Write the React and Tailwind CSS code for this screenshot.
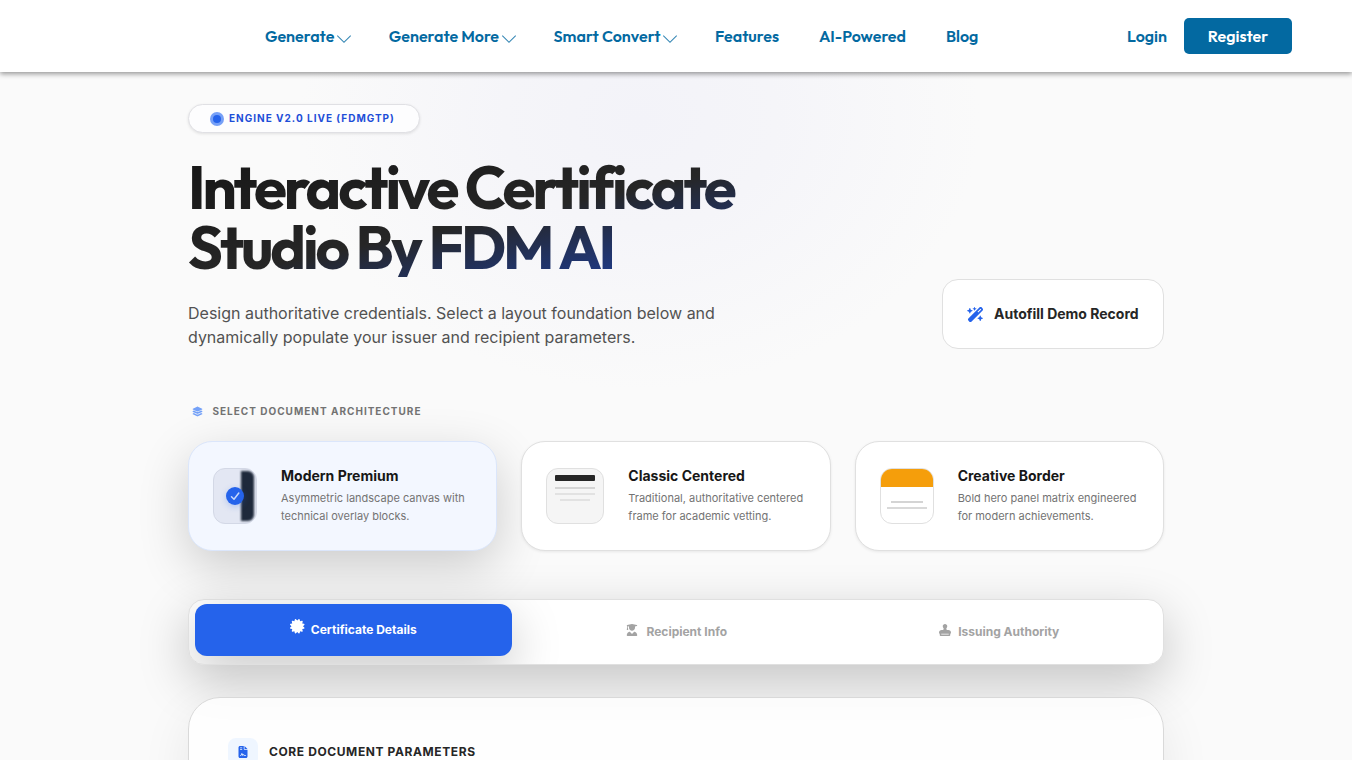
import {
  FaWandMagicSparkles,
  FaLayerGroup,
  FaCertificate,
  FaUserGraduate,
  FaStamp,
  FaFileContract,
} from "react-icons/fa6";

const navItems = [
  { label: "Generate", menu: true },
  { label: "Generate More", menu: true },
  { label: "Smart Convert", menu: true },
  { label: "Features" },
  { label: "AI-Powered" },
  { label: "Blog" },
];

function Header() {
  return (
    <header className="relative z-10 flex h-[72px] items-center bg-white pr-[60px] pl-[265px] font-['Outfit',sans-serif] text-base font-semibold text-[#0369a1] shadow-[0_2px_5px_rgba(0,0,0,0.4)]">
      <nav className="flex items-center gap-10">
        {navItems.map((item) => (
          <a key={item.label} className="flex items-center whitespace-nowrap">
            {item.label}
            {item.menu && (
              <span className="ml-[4.5px] size-[10px] rotate-45 border-r border-b border-[#0369a1]/80" />
            )}
          </a>
        ))}
      </nav>
      <div className="ml-auto flex items-center gap-[17px]">
        <a>Login</a>
        <a className="flex h-9 w-[108px] items-center justify-center rounded-[5px] bg-[#0369a1] text-white">
          Register
        </a>
      </div>
    </header>
  );
}

function ModernThumb() {
  return (
    <div className="relative h-14 w-11 shrink-0">
      <div className="flex h-full justify-end overflow-hidden rounded-xl border border-[#d3d8e6] bg-[#e3e7f3] p-[2px]">
        <div className="h-full w-[13px] rounded-r-[6px] bg-[#1e293b] blur-[1px]" />
      </div>
      <div className="absolute inset-0 flex items-center justify-center">
        <span className="flex size-[18px] items-center justify-center rounded-full bg-[#2563eb] shadow-[0_2px_6px_rgba(37,99,235,0.25)]">
          <svg viewBox="0 0 18 18" className="size-[18px]" fill="none" stroke="#c7d8fb" strokeWidth="1.5" strokeLinecap="round" strokeLinejoin="round">
            <path d="M5.5 9.8 8 12.3 12.8 6" />
          </svg>
        </span>
      </div>
    </div>
  );
}

function ClassicThumb() {
  return (
    <div className="flex h-14 w-[58px] shrink-0 flex-col items-center rounded-xl border border-[#e0e0e0] bg-[#f5f5f5] pt-[6px]">
      <div className="h-[6px] w-10 rounded-[1px] bg-[#262626]" />
      <div className="mt-[6px] h-[2px] w-10 bg-[#d4d4d4]" />
      <div className="mt-1 h-[2px] w-10 bg-[#e2e2e2]" />
      <div className="mt-1 h-[2px] w-[30px] bg-[#e2e2e2]" />
    </div>
  );
}

function CreativeThumb() {
  return (
    <div className="flex h-14 w-[54px] shrink-0 flex-col items-center overflow-hidden rounded-xl border border-[#e0e0e0] bg-white">
      <div className="h-[18px] w-full bg-[#f59e0b]" />
      <div className="mt-[14px] h-[2px] w-8 bg-[#d4d4d4]" />
      <div className="mt-1 h-[2px] w-10 bg-[#d9d9d9]" />
    </div>
  );
}

function LayoutCard({ thumb, title, lines, active }) {
  return (
    <div
      className={
        active
          ? "flex h-[110px] items-center gap-6 rounded-3xl border border-[#dbe6fb] bg-[#f3f7ff] pl-6 shadow-[0_16px_50px_rgba(0,0,0,0.19)]"
          : "flex h-[110px] items-center gap-6 rounded-3xl border border-[#e0e0e0] bg-white pl-6 shadow-[0_1px_3px_rgba(0,0,0,0.08)]"
      }
    >
      {thumb}
      <div className="pb-[2px] whitespace-nowrap">
        <h3 className="text-sm leading-5 font-bold text-[#171717]">{title}</h3>
        <p className="mt-[3px] text-[11px] leading-[18px] text-[#737373]">
          {lines[0]}
          <br />
          {lines[1]}
        </p>
      </div>
    </div>
  );
}

export default function App() {
  return (
    <div className="h-[760px] overflow-hidden bg-[#fafafa] font-['Inter',sans-serif]">
      <Header />
      <main className="h-[688px] overflow-hidden bg-[radial-gradient(ellipse_340px_270px_at_640px_48px,#f3f3f9_0%,#f5f5f9_40%,#fafafa_100%)] px-[188px] pt-8">
        <div className="flex items-end justify-between">
          <div className="w-[576px]">
            <div className="flex h-[29px] w-[232px] items-center gap-[5px] rounded-full border border-[#e0e0e4] bg-[#fdfdfe] pl-[21px] shadow-[0_1px_3px_rgba(0,0,0,0.1)]">
              <span className="flex size-[14px] items-center justify-center rounded-full bg-[#76a0f7]">
                <span className="size-2 rounded-full bg-[#2563eb]" />
              </span>
              <span className="pb-px text-[10px] leading-none font-bold tracking-[1px] whitespace-nowrap text-[#1d4ed8]">
                ENGINE V2.0 LIVE (FDMGTP)
              </span>
            </div>
            <h1 className="mt-6 bg-[linear-gradient(to_bottom_right,#171717,#262626_52%,#1e3a8a_88%)] bg-clip-text font-['Outfit',sans-serif] text-[60px] leading-[60px] font-bold tracking-[-3px] whitespace-nowrap text-transparent">
              Interactive Certificate
              <br />
              Studio By FDM AI
            </h1>
            <p className="mt-6 text-base leading-6 whitespace-nowrap text-[#525252]">
              Design authoritative credentials. Select a layout foundation below and
              <br />
              dynamically populate your issuer and recipient parameters.
            </p>
          </div>
          <button className="flex h-[70px] w-[222px] items-center rounded-2xl border border-[#e0e0e0] bg-white pl-6 text-sm font-bold text-[#262626]">
            <FaWandMagicSparkles className="mr-[10px] size-[17px] text-[#2563eb]" />
            Autofill Demo Record
          </button>
        </div>

        <div className="mt-[54px] flex h-4 items-center pl-1">
          <FaLayerGroup className="mr-[9.5px] size-[11px] text-[#74a1f8]" />
          <span className="text-[10px] font-bold tracking-[1px] text-[#737373]">
            SELECT DOCUMENT ARCHITECTURE
          </span>
        </div>

        <div className="mt-[22px] grid grid-cols-3 gap-6">
          <LayoutCard
            active
            thumb={<ModernThumb />}
            title="Modern Premium"
            lines={["Asymmetric landscape canvas with", "technical overlay blocks."]}
          />
          <LayoutCard
            thumb={<ClassicThumb />}
            title="Classic Centered"
            lines={["Traditional, authoritative centered", "frame for academic vetting."]}
          />
          <LayoutCard
            thumb={<CreativeThumb />}
            title="Creative Border"
            lines={["Bold hero panel matrix engineered", "for modern achievements."]}
          />
        </div>

        <div className="mt-12 flex h-[66px] items-center overflow-hidden rounded-2xl border border-[#e0e0e0] bg-white px-[6px] text-xs font-bold text-[#a3a3a3] shadow-[0_16px_50px_rgba(0,0,0,0.22)]">
          <div className="mb-1 flex h-[52px] w-[317px] items-center justify-center gap-[6px] rounded-xl bg-[#2563eb] text-white shadow-[0_16px_50px_rgba(0,0,0,0.22)]">
            <FaCertificate className="mb-[7px] size-[14.5px]" />
            <span>Certificate Details</span>
          </div>
          <div className="flex flex-1 items-center justify-center gap-2 pl-[7px]">
            <FaUserGraduate className="mb-[5px] size-3" />
            <span>Recipient Info</span>
          </div>
          <div className="flex flex-1 items-center justify-center gap-[7px] pl-[7px]">
            <FaStamp className="mb-[5px] size-3" />
            <span>Issuing Authority</span>
          </div>
        </div>

        <section className="mt-8 h-[300px] rounded-[32px] border border-[#d9d9d9] bg-white/80 px-[39px] pt-10 shadow-[0_16px_50px_rgba(0,0,0,0.08)]">
          <div className="flex items-center gap-[11px]">
            <div className="flex h-[28px] w-[30px] items-center justify-center rounded-lg bg-[#eff6ff]">
              <FaFileContract className="size-3 text-[#2563eb]" />
            </div>
            <h2 className="text-xs font-bold tracking-[0.6px] text-[#262626]">
              CORE DOCUMENT PARAMETERS
            </h2>
          </div>
        </section>
      </main>
    </div>
  );
}
